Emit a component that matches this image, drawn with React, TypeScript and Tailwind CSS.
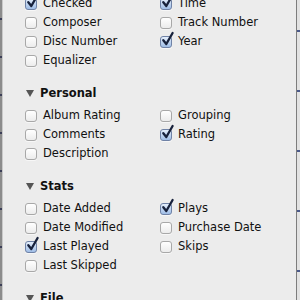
import * as React from "react"

type Field = { label: string; checked?: boolean }

interface Section {
  title: string
  left: Field[]
  right: Field[]
}

const sections: Section[] = [
  {
    title: "Personal",
    left: [{ label: "Album Rating" }, { label: "Comments" }, { label: "Description" }],
    right: [{ label: "Grouping" }, { label: "Rating", checked: true }],
  },
  {
    title: "Stats",
    left: [
      { label: "Date Added" },
      { label: "Date Modified" },
      { label: "Last Played", checked: true },
      { label: "Last Skipped" },
    ],
    right: [{ label: "Plays", checked: true }, { label: "Purchase Date" }, { label: "Skips" }],
  },
]

const topLeft: Field[] = [
  { label: "Checked", checked: true },
  { label: "Composer" },
  { label: "Disc Number" },
  { label: "Equalizer" },
]
const topRight: Field[] = [
  { label: "Time", checked: true },
  { label: "Track Number" },
  { label: "Year", checked: true },
]

function Checkbox({ checked }: { checked?: boolean }) {
  return (
    <span
      className={
        checked
          ? "relative h-[12px] w-[12px] shrink-0 rounded-[3px] border border-[#6f82a6] bg-gradient-to-b from-[#e4eefb] to-[#9fbde6] shadow-[0_1px_0_rgba(255,255,255,0.6)]"
          : "relative h-[12px] w-[12px] shrink-0 rounded-[3px] border border-[#a8a8a8] bg-gradient-to-b from-[#ffffff] to-[#ececec] shadow-[0_1px_0_rgba(255,255,255,0.6)]"
      }
    >
      {/* check pokes out above the box like the Aqua one */}
      {checked && (
        <svg
          className="absolute -top-[5px] left-[1px] overflow-visible"
          width="12"
          height="14"
          viewBox="0 0 12 14"
        >
          <path
            d="M1.3 8.2 L4.3 12 L10.6 1"
            fill="none"
            stroke="#17213b"
            strokeWidth="2.3"
            strokeLinecap="round"
            strokeLinejoin="round"
          />
        </svg>
      )}
    </span>
  )
}

function Row({ field }: { field: Field }) {
  return (
    <div className="flex h-[19px] items-center gap-[6px]">
      <Checkbox checked={field.checked} />
      <span className="whitespace-nowrap text-[#111111]">{field.label}</span>
    </div>
  )
}

function Columns({ left, right }: { left: Field[]; right: Field[] }) {
  return (
    <div className="grid grid-cols-[135px_1fr] pl-[22px]">
      <div>
        {left.map((f) => (
          <Row key={f.label} field={f} />
        ))}
      </div>
      <div>
        {right.map((f) => (
          <Row key={f.label} field={f} />
        ))}
      </div>
    </div>
  )
}

function Header({ title }: { title: string }) {
  return (
    <div className="mt-[14px] mb-[3px] flex h-[19px] items-center gap-[6px] pl-[23px]">
      <svg width="8" height="7" viewBox="0 0 8 7">
        <path d="M0 0 H8 L4 7 Z" fill="#555555" />
      </svg>
      <span className="font-bold text-[#111111]">{title}</span>
    </div>
  )
}

export default function App() {
  return (
    <div className="flex h-[300px] w-[300px] overflow-hidden bg-[#ececec] text-[11.5px] [font-family:'DejaVu_Sans',sans-serif]">
      <div className="flex w-[3px] shrink-0">
        <div className="w-[2px] bg-[repeating-linear-gradient(180deg,#8c8c8c_0px,#8c8c8c_18px,#3c3f57_18px,#3c3f57_20px,#8c8c8c_20px,#8c8c8c_38px)]" />
        <div className="w-[1px] bg-[#c9c9c9]" />
      </div>
      <div className="flex-1">
        <div className="-mt-[6px]">
          <Columns left={topLeft} right={topRight} />
        </div>
        {sections.map((s) => (
          <div key={s.title}>
            <Header title={s.title} />
            <Columns left={s.left} right={s.right} />
          </div>
        ))}
        <Header title="File" />
      </div>
      <div className="flex w-[4px] shrink-0">
        <div className="w-[1px] bg-[#7d7d7d]" />
        <div className="w-[3px] bg-[repeating-linear-gradient(180deg,#e2e2e2_0px,#e2e2e2_30px,#4b5a8a_30px,#4b5a8a_32px,#e2e2e2_32px,#e2e2e2_60px)]" />
      </div>
    </div>
  )
}
